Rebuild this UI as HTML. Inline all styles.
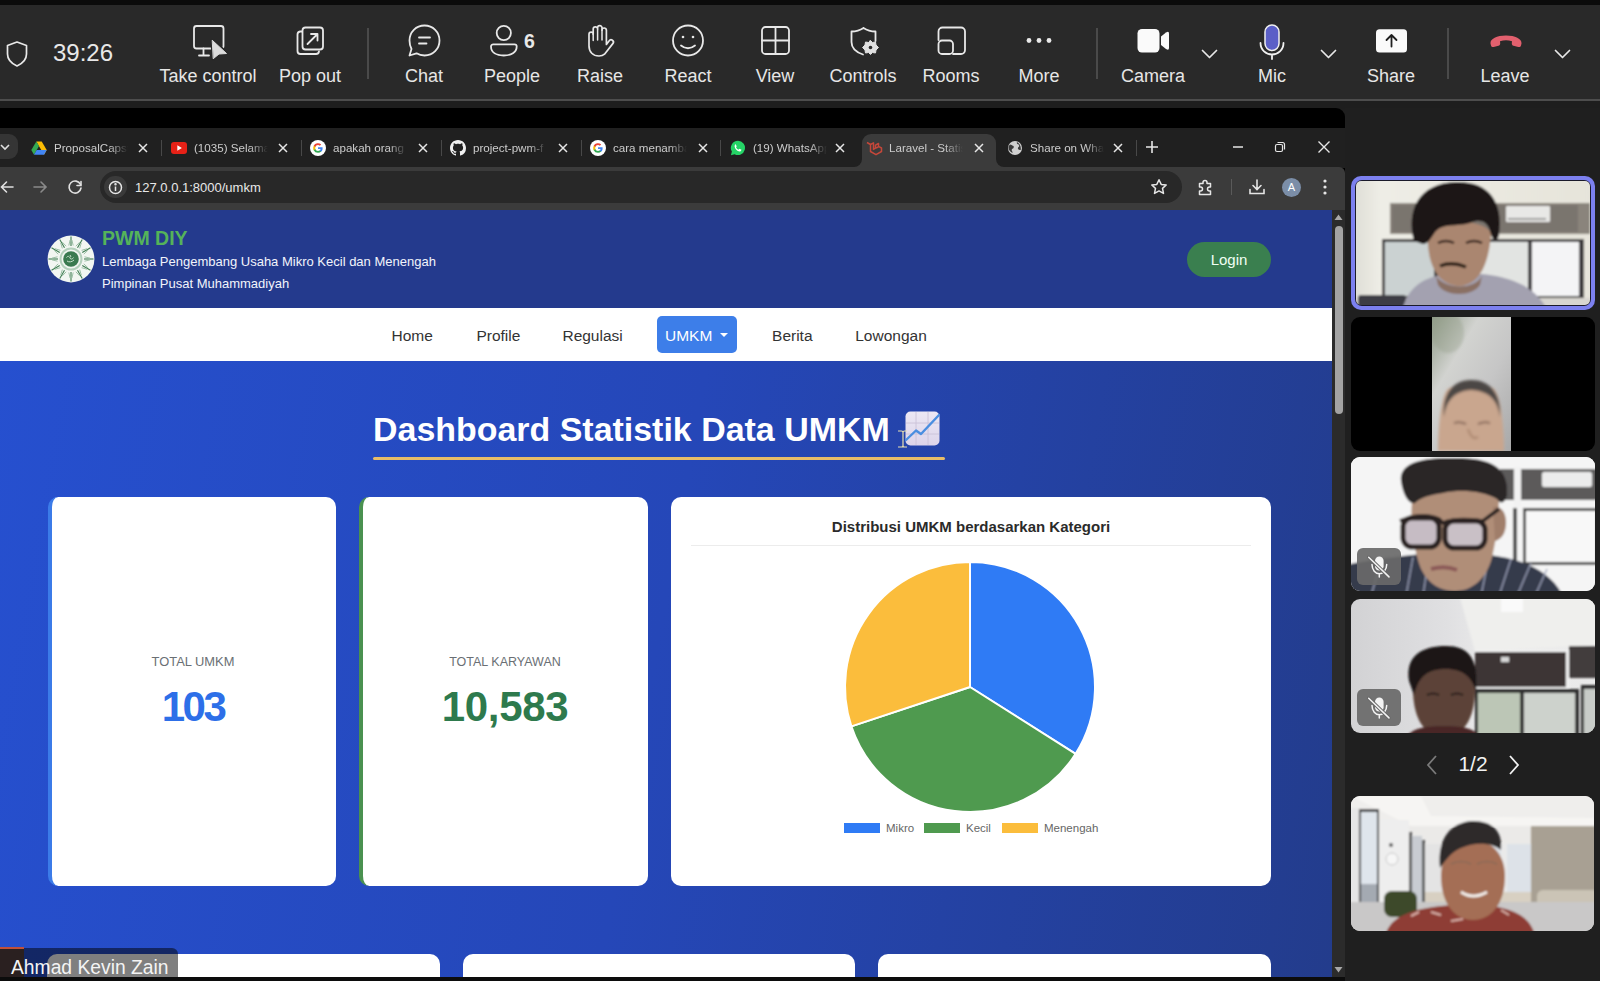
<!DOCTYPE html>
<html><head><meta charset="utf-8">
<style>
*{margin:0;padding:0;box-sizing:border-box}
html,body{width:1600px;height:981px;overflow:hidden;background:#1f1f1f;font-family:"Liberation Sans",sans-serif}
.abs{position:absolute}
#topstrip{position:absolute;left:0;top:0;width:1600px;height:5px;background:#0b0b0b}
#tbar{position:absolute;left:0;top:5px;width:1600px;height:94px;background:#292929}
#tline{position:absolute;left:0;top:99px;width:1600px;height:2px;background:#4d4d4d}
#tbelow{position:absolute;left:0;top:101px;width:1600px;height:8px;background:#1e1e1e}
.ti{position:absolute;top:0;height:94px;text-align:center;color:#e6e6e6;font-size:18px}
.ti .lb{position:absolute;left:-60px;right:-60px;top:58px;text-align:center;white-space:nowrap}
.ti svg{position:absolute;left:50%;top:18px;transform:translateX(-50%)}
.sep{position:absolute;top:23px;width:2px;height:52px;background:#4a4a4a}
#browser{position:absolute;left:0;top:108px;width:1345px;height:869px;background:#000;overflow:hidden;border-top-right-radius:9px}
#tabs{position:absolute;left:0;top:20px;width:1345px;height:40px;background:#202020}
#tooln{position:absolute;left:0;top:59px;width:1345px;height:43px;background:#3b3b3b;border-top-right-radius:6px}
.tab{position:absolute;top:0;height:37px;color:#d8d8d8;font-size:12px}
.tab .t{position:absolute;left:42px;top:12px;white-space:nowrap;overflow:hidden;width:72px}
.tab .x{position:absolute;left:130px;top:8px;font-size:16px;color:#e0e0e0}
#page{position:absolute;left:0;top:102px;width:1332px;height:767px;overflow:hidden;background:linear-gradient(100deg,#2650d0 0%,#2547b8 50%,#233c8c 100%)}
#hdr{position:absolute;left:0;top:0;width:1332px;height:98px;background:#243a8d}
#nav{position:absolute;left:0;top:98px;width:1332px;height:53px;background:#fff}
.nv{font-size:15.5px;line-height:18px;color:#333;white-space:nowrap}
.lg{font-size:11.5px;line-height:14px;color:#666}
.card{position:absolute;background:#fff;border-radius:10px}
#sb{position:absolute;left:1332px;top:102px;width:13px;height:767px;background:#2a2a2a}
#panel{position:absolute;left:1345px;top:108px;width:255px;height:873px;background:#1f1f1f}
.tile{position:absolute;left:1351px;width:244px;height:135px;border-radius:8px;overflow:hidden;background:#000}
</style></head><body>
<div id="topstrip"></div>
<div id="tbar"></div>
<div id="tline"></div>
<div id="tbelow"></div>

<svg class="abs" style="left:0;top:0" width="1600" height="100" viewBox="0 0 1600 100" fill="none" stroke="#e8e8e8" stroke-width="1.8" stroke-linecap="round" stroke-linejoin="round">
  <!-- shield -->
  <path d="M17 42 L26.5 45.5 V54 C26.5 59.5 22.5 63.5 17 66 C11.5 63.5 7.5 59.5 7.5 54 V45.5 Z" stroke-width="1.7"/>
  <!-- take control -->
  <rect x="194" y="26" width="29.5" height="22.5" rx="2.5"/>
  <path d="M203.5 48.5 V55.5 M199 55.5 H209"/>
  <path d="M212.5 40.5 L226.5 53.5 L219 54 L213.5 58.5 Z" fill="#292929" stroke="#292929" stroke-width="4"/><path d="M212.5 40.5 L226.5 53.5 L219 54 L213.5 58.5 Z" fill="#dcdcdc" stroke="#dcdcdc" stroke-width="1"/>
  <!-- pop out -->
  <path d="M302 31.5 H300 A3 3 0 0 0 297.5 34.5 V51 A3 3 0 0 0 300.5 54 H316 A3 3 0 0 0 319 51.5"/>
  <rect x="302.5" y="27.5" width="20.5" height="22" rx="3"/>
  <path d="M307.5 44 L317.5 34 M311 34 H317.5 V40.5"/>
  <!-- chat -->
  <path d="M424.5 25.5 C433 25.5 439.5 32 439.5 40.5 C439.5 49 433 55.5 424.5 55.5 C421.5 55.5 418.8 54.7 416.5 53.3 L409.5 55.5 L411.5 49 C410.2 46.5 409.5 43.5 409.5 40.5 C409.5 32 416 25.5 424.5 25.5 Z"/>
  <path d="M419 37.5 H430 M419 43.5 H426.5"/>
  <!-- people -->
  <circle cx="503.8" cy="33" r="7.1"/>
  <path d="M493.5 44.3 H514.5 A2.2 2.2 0 0 1 516.7 46.5 C516.7 52.5 511 55.5 503.8 55.5 C496.5 55.5 491 52.5 491 46.5 A2.2 2.2 0 0 1 493.5 44.3 Z"/>
  <!-- raise hand -->
  <path d="M589 46 V34.2 a2.1 2.1 0 0 1 4.2 0 V29 a2.2 2.2 0 0 1 4.4 0 V27.8 a2.2 2.2 0 0 1 4.4 0 V30.2 a2.2 2.2 0 0 1 4.4 0 V44.5 L609.2 40.8 a2.3 2.3 0 0 1 3.8 2.6 L604.5 54.2 C603 55.6 601.5 56 599 56 C593 56 589 52 589 46 Z" stroke-width="1.7"/>
  <path d="M593.2 34.5 V40.5 M597.6 29.5 V40 M602 30 V40" stroke-width="1.5"/>
  <!-- react -->
  <circle cx="688" cy="40.5" r="15"/>
  <circle cx="683" cy="37" r="1.3" fill="#e8e8e8" stroke="none"/>
  <circle cx="693" cy="37" r="1.3" fill="#e8e8e8" stroke="none"/>
  <path d="M681 45.5 Q688 51 695 45.5"/>
  <!-- view -->
  <rect x="762" y="27" width="27" height="27" rx="3.5"/>
  <path d="M775.5 27 V54 M762 40.5 H789"/>
  <!-- controls -->
  <path d="M863.5 28 C860.5 30 856 31.5 851.5 31.5 V42 C851.5 48 855.5 52 863 54.5 M863.5 28 C866.5 30 871 31.5 875.5 31.5 V41"/>
  <path d="M870.5 40.5 L872.5 42.5 L875.5 42 L876 45 L878.5 47.5 L876 50 L875.5 53 L872.5 52.5 L870.5 54.5 L868.5 52.5 L865.5 53 L865 50 L862.5 47.5 L865 45 L865.5 42 L868.5 42.5 Z" fill="#e0e0e0" stroke="#e0e0e0" stroke-width="1"/>
  <circle cx="870.5" cy="47.5" r="1.8" fill="#292929" stroke="none"/>
  <!-- rooms -->
  <path d="M938.5 40 V31.5 A4 4 0 0 1 942.5 27.5 H961 A4 4 0 0 1 965 31.5 V50 A4 4 0 0 1 961 54 H953"/>
  <rect x="938.5" y="40.5" width="14.5" height="13.5" rx="3.5"/>
  <!-- more -->
  <circle cx="1029" cy="40.5" r="2.4" fill="#e8e8e8" stroke="none"/>
  <circle cx="1039" cy="40.5" r="2.4" fill="#e8e8e8" stroke="none"/>
  <circle cx="1049" cy="40.5" r="2.4" fill="#e8e8e8" stroke="none"/>
  <!-- camera -->
  <rect x="1137.5" y="29" width="22" height="23.5" rx="4.5" fill="#fafafa" stroke="none"/>
  <path d="M1161 36.5 L1166 32.5 Q1169 30.5 1169 33.5 V48 Q1169 51 1166 49 L1161 45 Z" fill="#fafafa" stroke="none"/>
  <path d="M1202.5 50.5 L1209.5 57.5 L1216.5 50.5" stroke-width="1.7"/>
  <!-- mic -->
  <rect x="1265" y="25" width="14" height="25.5" rx="7" fill="#5b5fc7" stroke="#f0f0f0" stroke-width="1.5"/>
  <path d="M1260.5 43 C1260.5 50 1266 54.5 1272 54.5 C1278 54.5 1283.5 50 1283.5 43 M1272 54.5 V59" stroke="#f0f0f0"/>
  <path d="M1321.5 50.5 L1328.5 57.5 L1335.5 50.5" stroke-width="1.7"/>
  <!-- share -->
  <rect x="1376" y="29.3" width="31" height="23.3" rx="3.5" fill="#fafafa" stroke="none"/>
  <path d="M1391.5 46.5 V35 M1386.5 40 L1391.5 35 L1396.5 40" stroke="#202020" stroke-width="1.8"/>
  <!-- leave -->
  <path d="M1490.5 43.5 C1490 39 1497 35.5 1506 35.5 C1515 35.5 1522 39 1521.5 43.5 L1521 45.5 C1520.7 46.8 1519.5 47.3 1518.3 47 L1513.5 45.8 C1512.3 45.5 1511.7 44.5 1511.8 43.3 L1512 41.2 C1508 39.8 1504 39.8 1500 41.2 L1500.2 43.3 C1500.3 44.5 1499.7 45.5 1498.5 45.8 L1493.7 47 C1492.5 47.3 1491.3 46.8 1491 45.5 Z" fill="#e2606e" stroke="none"/>
  <path d="M1555.5 50.5 L1562.5 57.5 L1569.5 50.5" stroke-width="1.7"/>
</svg>
<div class="abs" style="left:53px;top:39px;font-size:24px;color:#e8e8e8;letter-spacing:0px;line-height:28px">39:26</div>
<div class="abs" style="left:524px;top:29px;font-size:19.5px;font-weight:bold;color:#e8e8e8;line-height:24px">6</div>
<div class="sep" style="left:367px;top:28px;height:51px"></div>
<div class="sep" style="left:1096px;top:28px;height:51px"></div>
<div class="sep" style="left:1447px;top:28px;height:51px"></div>
<div class="abs tl" style="left:128px;top:65px;width:160px;text-align:center;font-size:18px;line-height:22px;color:#e6e6e6">Take control</div>
<div class="abs tl" style="left:230px;top:65px;width:160px;text-align:center;font-size:18px;line-height:22px;color:#e6e6e6">Pop out</div>
<div class="abs tl" style="left:344px;top:65px;width:160px;text-align:center;font-size:18px;line-height:22px;color:#e6e6e6">Chat</div>
<div class="abs tl" style="left:432px;top:65px;width:160px;text-align:center;font-size:18px;line-height:22px;color:#e6e6e6">People</div>
<div class="abs tl" style="left:520px;top:65px;width:160px;text-align:center;font-size:18px;line-height:22px;color:#e6e6e6">Raise</div>
<div class="abs tl" style="left:608px;top:65px;width:160px;text-align:center;font-size:18px;line-height:22px;color:#e6e6e6">React</div>
<div class="abs tl" style="left:695px;top:65px;width:160px;text-align:center;font-size:18px;line-height:22px;color:#e6e6e6">View</div>
<div class="abs tl" style="left:783px;top:65px;width:160px;text-align:center;font-size:18px;line-height:22px;color:#e6e6e6">Controls</div>
<div class="abs tl" style="left:871px;top:65px;width:160px;text-align:center;font-size:18px;line-height:22px;color:#e6e6e6">Rooms</div>
<div class="abs tl" style="left:959px;top:65px;width:160px;text-align:center;font-size:18px;line-height:22px;color:#e6e6e6">More</div>
<div class="abs tl" style="left:1073px;top:65px;width:160px;text-align:center;font-size:18px;line-height:22px;color:#e6e6e6">Camera</div>
<div class="abs tl" style="left:1192px;top:65px;width:160px;text-align:center;font-size:18px;line-height:22px;color:#e6e6e6">Mic</div>
<div class="abs tl" style="left:1311px;top:65px;width:160px;text-align:center;font-size:18px;line-height:22px;color:#e6e6e6">Share</div>
<div class="abs tl" style="left:1425px;top:65px;width:160px;text-align:center;font-size:18px;line-height:22px;color:#e6e6e6">Leave</div>


<div id="browser">
  <div id="tabs"></div>
  <div id="tooln"></div>
<div class="abs" style="left:-12px;top:26px;width:30px;height:25px;border-radius:9px;background:#353535"></div><svg class="abs" style="left:0;top:34px" width="12" height="10" viewBox="0 0 12 10"><path d="M1 3l4 4 4-4" stroke="#e0e0e0" stroke-width="1.6" fill="none"/></svg><div class="abs" style="left:862px;top:26px;width:134px;height:40px;background:#3b3b3b;border-radius:9px 9px 0 0"></div><div class="abs" style="left:854px;top:51px;width:8px;height:8px;background:#3b3b3b"></div><div class="abs" style="left:846px;top:43px;width:16px;height:16px;background:#202020;border-radius:0 0 8px 0"></div><div class="abs" style="left:996px;top:51px;width:8px;height:8px;background:#3b3b3b"></div><div class="abs" style="left:996px;top:43px;width:16px;height:16px;background:#202020;border-radius:0 0 0 8px"></div><svg class="abs" style="left:31px;top:32px" width="16" height="16" viewBox="0 0 16 16"><path d="M5.3 1.5h5.4l5 8.6-2.7 4.6z" fill="#fbbc04"/><path d="M5.3 1.5L0.3 10.1l2.7 4.6 5-8.6z" fill="#34a853"/><path d="M3 14.7h10l2.7-4.6H5.7z" fill="#4285f4"/></svg><div class="abs" style="left:54px;top:32px;width:74px;height:16px;overflow:hidden;white-space:nowrap;font-size:11.6px;line-height:16px;color:#cdcdcd;-webkit-mask-image:linear-gradient(90deg,#000 75%,transparent 100%)">ProposalCapstone</div><svg class="abs" style="left:137px;top:34px" width="12" height="12" viewBox="0 0 12 12"><path d="M2 2l8 8M10 2l-8 8" stroke="#e6e6e6" stroke-width="1.5"/></svg><div class="abs" style="left:161px;top:32px;width:1px;height:16px;background:#484848"></div><svg class="abs" style="left:171px;top:34px" width="16" height="12" viewBox="0 0 16 12"><rect width="16" height="12" rx="3" fill="#e62117"/><path d="M6.3 3.3v5.4l4.6-2.7z" fill="#fff"/></svg><div class="abs" style="left:194px;top:32px;width:74px;height:16px;overflow:hidden;white-space:nowrap;font-size:11.6px;line-height:16px;color:#cdcdcd;-webkit-mask-image:linear-gradient(90deg,#000 75%,transparent 100%)">(1035) Selamat</div><svg class="abs" style="left:276.5px;top:34px" width="12" height="12" viewBox="0 0 12 12"><path d="M2 2l8 8M10 2l-8 8" stroke="#e6e6e6" stroke-width="1.5"/></svg><div class="abs" style="left:301px;top:32px;width:1px;height:16px;background:#484848"></div><svg class="abs" style="left:310px;top:32px" width="16" height="16" viewBox="0 0 16 16"><circle cx="8" cy="8" r="8" fill="#fff"/><path d="M12.6 8.2c0-.4 0-.7-.1-1H8v1.9h2.6a2.3 2.3 0 0 1-1 1.5v1.2h1.6c1-.9 1.400-2.100 1.400-3.600z" fill="#4285f4"/><path d="M8 12.8c1.3 0 2.4-.4 3.2-1.2l-1.6-1.2c-.4.3-1 .5-1.6.5-1.2 0-2.3-.8-2.6-2H3.7v1.3A4.8 4.8 0 0 0 8 12.8z" fill="#34a853"/><path d="M5.4 8.9a2.9 2.9 0 0 1 0-1.8V5.8H3.7a4.8 4.8 0 0 0 0 4.4z" fill="#fbbc04"/><path d="M8 5.1c.7 0 1.3.2 1.8.7l1.4-1.4A4.8 4.8 0 0 0 3.7 5.8l1.7 1.3c.3-1.2 1.4-2 2.6-2z" fill="#ea4335"/></svg><div class="abs" style="left:333px;top:32px;width:74px;height:16px;overflow:hidden;white-space:nowrap;font-size:11.6px;line-height:16px;color:#cdcdcd;-webkit-mask-image:linear-gradient(90deg,#000 75%,transparent 100%)">apakah orang</div><svg class="abs" style="left:416.5px;top:34px" width="12" height="12" viewBox="0 0 12 12"><path d="M2 2l8 8M10 2l-8 8" stroke="#e6e6e6" stroke-width="1.5"/></svg><div class="abs" style="left:440.5px;top:32px;width:1px;height:16px;background:#484848"></div><svg class="abs" style="left:450px;top:32px" width="16" height="16" viewBox="0 0 16 16"><path fill="#f0f0f0" d="M8 0C3.58 0 0 3.58 0 8c0 3.54 2.29 6.53 5.47 7.590.4.07.55-.17.55-.38 0-.19-.01-.82-.01-1.49-2.01.37-2.53-.49-2.69-.94-.09-.23-.48-.94-.82-1.13-.28-.15-.68-.52-.01-.53.63-.01 1.08.58 1.23.82.72 1.21 1.87.87 2.33.66.07-.52.28-.87.51-1.07-1.78-.2-3.64-.89-3.64-3.95 0-.87.31-1.59.82-2.15-.08-.2-.36-1.02.08-2.12 0 0 .67-.21 2.2.82.64-.18 1.32-.27 2-.27.68 0 1.36.09 2 .27 1.53-1.04 2.2-.82 2.2-.82.44 1.1.16 1.92.08 2.12.51.56.82 1.27.82 2.15 0 3.07-1.87 3.75-3.65 3.95.29.25.54.73.54 1.48 0 1.07-.01 1.93-.01 2.2 0 .21.15.46.55.38A8.01 8.01 0 0 0 16 8c0-4.42-3.58-8-8-8z"/></svg><div class="abs" style="left:473px;top:32px;width:74px;height:16px;overflow:hidden;white-space:nowrap;font-size:11.6px;line-height:16px;color:#cdcdcd;-webkit-mask-image:linear-gradient(90deg,#000 75%,transparent 100%)">project-pwm-f</div><svg class="abs" style="left:556.5px;top:34px" width="12" height="12" viewBox="0 0 12 12"><path d="M2 2l8 8M10 2l-8 8" stroke="#e6e6e6" stroke-width="1.5"/></svg><div class="abs" style="left:580.5px;top:32px;width:1px;height:16px;background:#484848"></div><svg class="abs" style="left:590px;top:32px" width="16" height="16" viewBox="0 0 16 16"><circle cx="8" cy="8" r="8" fill="#fff"/><path d="M12.6 8.2c0-.4 0-.7-.1-1H8v1.9h2.6a2.3 2.3 0 0 1-1 1.5v1.2h1.6c1-.9 1.400-2.100 1.400-3.600z" fill="#4285f4"/><path d="M8 12.8c1.3 0 2.4-.4 3.2-1.2l-1.6-1.2c-.4.3-1 .5-1.6.5-1.2 0-2.3-.8-2.6-2H3.7v1.3A4.8 4.8 0 0 0 8 12.8z" fill="#34a853"/><path d="M5.4 8.9a2.9 2.9 0 0 1 0-1.8V5.8H3.7a4.8 4.8 0 0 0 0 4.4z" fill="#fbbc04"/><path d="M8 5.1c.7 0 1.3.2 1.8.7l1.4-1.4A4.8 4.8 0 0 0 3.7 5.8l1.7 1.3c.3-1.2 1.4-2 2.6-2z" fill="#ea4335"/></svg><div class="abs" style="left:613px;top:32px;width:74px;height:16px;overflow:hidden;white-space:nowrap;font-size:11.6px;line-height:16px;color:#cdcdcd;-webkit-mask-image:linear-gradient(90deg,#000 75%,transparent 100%)">cara menambah</div><svg class="abs" style="left:696.5px;top:34px" width="12" height="12" viewBox="0 0 12 12"><path d="M2 2l8 8M10 2l-8 8" stroke="#e6e6e6" stroke-width="1.5"/></svg><div class="abs" style="left:720px;top:32px;width:1px;height:16px;background:#484848"></div><svg class="abs" style="left:730px;top:32px" width="16" height="16" viewBox="0 0 16 16"><path d="M8 .8a7.1 7.1 0 0 0-6.1 10.8L.9 15.2l3.7-1A7.1 7.1 0 1 0 8 .8z" fill="#25d366"/><path d="M5.4 4.3c.2 0 .4 0 .5.3l.7 1.6c.1.2 0 .4-.1.5l-.5.6c.5 1 1.4 1.9 2.5 2.4l.6-.7c.1-.2.3-.2.5-.1l1.6.7c.2.1.3.3.2.5-.2.9-.9 1.5-1.8 1.5-2.5-.3-4.7-2.4-5-5 0-.9.4-1.9.8-2.3z" fill="#fff"/></svg><div class="abs" style="left:753px;top:32px;width:74px;height:16px;overflow:hidden;white-space:nowrap;font-size:11.6px;line-height:16px;color:#cdcdcd;-webkit-mask-image:linear-gradient(90deg,#000 75%,transparent 100%)">(19) WhatsApp</div><svg class="abs" style="left:834px;top:34px" width="12" height="12" viewBox="0 0 12 12"><path d="M2 2l8 8M10 2l-8 8" stroke="#e6e6e6" stroke-width="1.5"/></svg><svg class="abs" style="left:865px;top:31px" width="18" height="18" viewBox="0 0 18 18" fill="none" stroke="#c4473a" stroke-width="1.5" stroke-linejoin="round"><path d="M2 3.5l3.5 2v7l5.5 3.2 5.5-3.2V9l-3-1.7V4.5l-3 1.7v3l-2.5 1.5M5.5 5.5l3-1.7v7M11 9.2l3-1.7"/></svg><div class="abs" style="left:889px;top:32px;width:74px;height:16px;overflow:hidden;white-space:nowrap;font-size:11.6px;line-height:16px;color:#cdcdcd;-webkit-mask-image:linear-gradient(90deg,#000 75%,transparent 100%)">Laravel - Statistik</div><svg class="abs" style="left:973px;top:34px" width="12" height="12" viewBox="0 0 12 12"><path d="M2 2l8 8M10 2l-8 8" stroke="#e6e6e6" stroke-width="1.5"/></svg><svg class="abs" style="left:1007px;top:32px" width="16" height="16" viewBox="0 0 16 16"><circle cx="8" cy="8" r="7" fill="#d0d0d0"/><path d="M3 4.5c1.5 0 2 1 3 1.2s1 1.5.5 2.3-1.8.8-1.8 2 1 1.5.8 3C3.3 12 1.5 9.8 1.5 8 1.5 6.6 2 5.5 3 4.5zM10 2c-.5 1 0 2 1 2.3s1.5 1.2 1 2.2-1.5 1-1 2.3 1.5 1.2 2.7 1.3C14.3 7 13 3.5 10 2z" fill="#3a3a3a"/></svg><div class="abs" style="left:1030px;top:32px;width:74px;height:16px;overflow:hidden;white-space:nowrap;font-size:11.6px;line-height:16px;color:#cdcdcd;-webkit-mask-image:linear-gradient(90deg,#000 75%,transparent 100%)">Share on WhatsApp</div><svg class="abs" style="left:1112px;top:34px" width="12" height="12" viewBox="0 0 12 12"><path d="M2 2l8 8M10 2l-8 8" stroke="#e6e6e6" stroke-width="1.5"/></svg><div class="abs" style="left:1136px;top:32px;width:1px;height:16px;background:#484848"></div><svg class="abs" style="left:1145px;top:32px" width="14" height="14" viewBox="0 0 14 14"><path d="M7 1v12M1 7h12" stroke="#e6e6e6" stroke-width="1.6"/></svg><svg class="abs" style="left:1232px;top:32px" width="12" height="14" viewBox="0 0 12 14"><path d="M1 7h10" stroke="#e6e6e6" stroke-width="1.3"/></svg><svg class="abs" style="left:1274px;top:33px" width="12" height="12" viewBox="0 0 12 12" fill="none" stroke="#e6e6e6" stroke-width="1.2"><rect x="1.5" y="3.5" width="7" height="7" rx="1.5"/><path d="M3.5 1.5h5a2 2 0 0 1 2 2v5"/></svg><svg class="abs" style="left:1317px;top:32px" width="14" height="14" viewBox="0 0 14 14"><path d="M1.5 1.5l11 11M12.5 1.5l-11 11" stroke="#e6e6e6" stroke-width="1.4"/></svg><svg class="abs" style="left:0;top:71px" width="90" height="16" viewBox="0 0 90 16" fill="none" stroke-width="1.6" stroke-linecap="round"><path d="M13 8H1.5M6.5 3L1.5 8l5 5" stroke="#e0e0e0"/><path d="M34 8h12M41 3l5 5-5 5" stroke="#8a8a8a"/><path d="M80.5 5.5A6 6 0 1 0 81 9" stroke="#e0e0e0"/><path d="M81 2.5v4h-4" stroke="#e0e0e0"/></svg><div class="abs" style="left:100px;top:63px;width:1082px;height:32px;border-radius:16px;background:#282828"></div><div class="abs" style="left:104px;top:68px;width:23px;height:22px;border-radius:11px;background:#3a3a3a"></div><svg class="abs" style="left:108px;top:72px" width="15" height="15" viewBox="0 0 15 15" fill="none" stroke="#e6e6e6" stroke-width="1.5"><circle cx="7.5" cy="7.5" r="6"/><path d="M7.5 6.5v4.5"/><circle cx="7.5" cy="4.3" r=".5" fill="#e6e6e6"/></svg><div class="abs" style="left:135px;top:72px;font-size:13px;line-height:16px;color:#e8e8e8">127.0.0.1:8000/umkm</div><svg class="abs" style="left:1150px;top:70px" width="18" height="18" viewBox="0 0 18 18"><path d="M9 1.8l2.2 4.6 5 .6-3.7 3.4 1 5-4.5-2.5-4.5 2.5 1-5L1.8 7l5-.6z" fill="none" stroke="#e6e6e6" stroke-width="1.5" stroke-linejoin="round"/></svg><svg class="abs" style="left:1197px;top:70px" width="18" height="18" viewBox="0 0 18 18"><path d="M2.5 5.5h3.5v-1a2 2 0 0 1 4 0v1h3.5v3.5h-1a2 2 0 0 0 0 4h1v3.5h-11v-3.5h1a2 2 0 0 0 0-4h-1z" fill="none" stroke="#e6e6e6" stroke-width="1.5" stroke-linejoin="round"/></svg><div class="abs" style="left:1231px;top:71px;width:1px;height:16px;background:#5a5a5a"></div><svg class="abs" style="left:1248px;top:70px" width="18" height="18" viewBox="0 0 18 18" fill="none" stroke="#e6e6e6" stroke-width="1.6" stroke-linecap="round"><path d="M9 2v9M5 7.5l4 4 4-4M2 11.5v4h14v-4"/></svg><div class="abs" style="left:1282px;top:70px;width:19px;height:19px;border-radius:50%;background:#7b8ea8;color:#fff;font-size:11px;line-height:19px;text-align:center">A</div><svg class="abs" style="left:1320px;top:70px" width="10" height="18" viewBox="0 0 10 18" fill="#e6e6e6"><circle cx="5" cy="3" r="1.6"/><circle cx="5" cy="9" r="1.6"/><circle cx="5" cy="15" r="1.6"/></svg>
  <div id="page">

    <div id="hdr">
      <svg class="abs" style="left:46.5px;top:25px" width="48" height="48" viewBox="0 0 48 48"><circle cx="24" cy="24" r="23.4" fill="#f2f6f2"/><circle cx="24" cy="24" r="10.5" fill="none" stroke="#b4d0bc" stroke-width="2"/><path d="M24.00 11.00L24.00 1.50" stroke="#3f7c52" stroke-width="1.1"/><path d="M26.20 10.50L24.88 5.00" stroke="#9cc0a6" stroke-width="1"/><path d="M21.80 10.50L23.12 5.00" stroke="#9cc0a6" stroke-width="1"/><path d="M30.50 12.74L35.25 4.51" stroke="#3f7c52" stroke-width="1.1"/><path d="M32.66 13.41L34.26 7.99" stroke="#9cc0a6" stroke-width="1"/><path d="M28.84 11.21L32.74 7.11" stroke="#9cc0a6" stroke-width="1"/><path d="M35.26 17.50L43.49 12.75" stroke="#3f7c52" stroke-width="1.1"/><path d="M36.79 19.16L40.89 15.26" stroke="#9cc0a6" stroke-width="1"/><path d="M34.59 15.34L40.01 13.74" stroke="#9cc0a6" stroke-width="1"/><path d="M37.00 24.00L46.50 24.00" stroke="#3f7c52" stroke-width="1.1"/><path d="M37.50 26.20L43.00 24.88" stroke="#9cc0a6" stroke-width="1"/><path d="M37.50 21.80L43.00 23.12" stroke="#9cc0a6" stroke-width="1"/><path d="M35.26 30.50L43.49 35.25" stroke="#3f7c52" stroke-width="1.1"/><path d="M34.59 32.66L40.01 34.26" stroke="#9cc0a6" stroke-width="1"/><path d="M36.79 28.84L40.89 32.74" stroke="#9cc0a6" stroke-width="1"/><path d="M30.50 35.26L35.25 43.49" stroke="#3f7c52" stroke-width="1.1"/><path d="M28.84 36.79L32.74 40.89" stroke="#9cc0a6" stroke-width="1"/><path d="M32.66 34.59L34.26 40.01" stroke="#9cc0a6" stroke-width="1"/><path d="M24.00 37.00L24.00 46.50" stroke="#3f7c52" stroke-width="1.1"/><path d="M21.80 37.50L23.12 43.00" stroke="#9cc0a6" stroke-width="1"/><path d="M26.20 37.50L24.88 43.00" stroke="#9cc0a6" stroke-width="1"/><path d="M17.50 35.26L12.75 43.49" stroke="#3f7c52" stroke-width="1.1"/><path d="M15.34 34.59L13.74 40.01" stroke="#9cc0a6" stroke-width="1"/><path d="M19.16 36.79L15.26 40.89" stroke="#9cc0a6" stroke-width="1"/><path d="M12.74 30.50L4.51 35.25" stroke="#3f7c52" stroke-width="1.1"/><path d="M11.21 28.84L7.11 32.74" stroke="#9cc0a6" stroke-width="1"/><path d="M13.41 32.66L7.99 34.26" stroke="#9cc0a6" stroke-width="1"/><path d="M11.00 24.00L1.50 24.00" stroke="#3f7c52" stroke-width="1.1"/><path d="M10.50 21.80L5.00 23.12" stroke="#9cc0a6" stroke-width="1"/><path d="M10.50 26.20L5.00 24.88" stroke="#9cc0a6" stroke-width="1"/><path d="M12.74 17.50L4.51 12.75" stroke="#3f7c52" stroke-width="1.1"/><path d="M13.41 15.34L7.99 13.74" stroke="#9cc0a6" stroke-width="1"/><path d="M11.21 19.16L7.11 15.26" stroke="#9cc0a6" stroke-width="1"/><path d="M17.50 12.74L12.75 4.51" stroke="#3f7c52" stroke-width="1.1"/><path d="M19.16 11.21L15.26 7.11" stroke="#9cc0a6" stroke-width="1"/><path d="M15.34 13.41L13.74 7.99" stroke="#9cc0a6" stroke-width="1"/><circle cx="24" cy="24" r="7.8" fill="#3a7a50"/><path d="M19.5 22.5c1.5-2 3-1 3.5.5s2.5 1.5 3.5-.5M20 26c2 1.5 5 1 7-1M23 20l1 2" stroke="#c8e0cc" stroke-width="1" fill="none"/></svg>
      <div class="abs" style="left:102px;top:16px;font-size:19.5px;line-height:24px;font-weight:bold;color:#55b35a">PWM DIY</div>
      <div class="abs" style="left:102px;top:42.5px;font-size:13px;line-height:18px;color:#f2f4fb">Lembaga Pengembang Usaha Mikro Kecil dan Menengah</div>
      <div class="abs" style="left:102px;top:64.5px;font-size:13px;line-height:18px;color:#f2f4fb">Pimpinan Pusat Muhammadiyah</div>
      <div class="abs" style="left:1187px;top:32px;width:84px;height:35px;border-radius:18px;background:#3a7f4f;color:#f0fff4;font-size:15px;line-height:35px;text-align:center">Login</div>
    </div>
    <div id="nav">
      <div class="abs nv" style="left:352.2px;top:19px;width:120px;text-align:center">Home</div>
      <div class="abs nv" style="left:438.4px;top:19px;width:120px;text-align:center">Profile</div>
      <div class="abs nv" style="left:532.6px;top:19px;width:120px;text-align:center">Regulasi</div>
      <div class="abs" style="left:657px;top:8px;width:80px;height:37px;border-radius:5px;background:#3d7ee9"></div>
      <div class="abs nv" style="left:628.7px;top:19px;width:120px;text-align:center;color:#fff">UMKM</div>
      <svg class="abs" style="left:719px;top:24px" width="10" height="6" viewBox="0 0 10 6"><path d="M1 1h8L5 5z" fill="#fff"/></svg>
      <div class="abs nv" style="left:732.3px;top:19px;width:120px;text-align:center">Berita</div>
      <div class="abs nv" style="left:831.0px;top:19px;width:120px;text-align:center">Lowongan</div>
    </div>
    <div class="abs" style="left:373px;top:198px;font-size:33.95px;line-height:42px;font-weight:bold;color:#fff;white-space:nowrap">Dashboard Statistik Data UMKM</div>
    <svg class="abs" style="left:905px;top:201px" width="35" height="36" viewBox="0 0 35 36">
      <defs><linearGradient id="eg" x1="0" y1="0" x2="0" y2="1"><stop offset="0" stop-color="#ece8f4"/><stop offset="1" stop-color="#dcd4ea"/></linearGradient></defs>
      <rect x="0.5" y="0.5" width="34" height="34" rx="5" fill="url(#eg)"/>
      <path d="M11 1v33M23 1v33M1 12h33M1 23h33" stroke="#cbc2d8" stroke-width=".9"/>
      <path d="M1 29 L11 19.5 L16 23 L34 4" stroke="#4a8ee0" stroke-width="2.4" fill="none" stroke-linecap="round" stroke-linejoin="round"/>
    </svg>
    <svg class="abs" style="left:897px;top:220px" width="11" height="18" viewBox="0 0 11 18" fill="none" stroke-width="1.2"><path d="M1 1h3.5a1.5 1.5 0 0 1 1.5 1.5V15.5A1.5 1.5 0 0 1 4.5 17H1M10 1H7.5A1.5 1.5 0 0 0 6 2.5M6 15.5A1.5 1.5 0 0 0 7.5 17H10" stroke="#e8e0b0"/></svg>
    <div class="abs" style="left:373px;top:247px;width:572px;height:3px;background:#e8bd68;border-radius:2px"></div>

    <div class="card" style="left:48px;top:287px;width:288px;height:389px;border-left:4px solid #3b7be8"></div>
    <div class="abs" style="left:48px;top:444px;width:290px;text-align:center;font-size:12.9px;line-height:16px;color:#6a6f74">TOTAL UMKM</div>
    <div class="abs" style="left:48px;top:474px;width:290px;text-align:center;font-size:42px;line-height:46px;font-weight:bold;color:#2d6fe8;letter-spacing:-2.5px">103</div>

    <div class="card" style="left:359px;top:287px;width:289px;height:389px;border-left:4px solid #4a9150"></div>
    <div class="abs" style="left:359px;top:444px;width:292px;text-align:center;font-size:12.5px;line-height:16px;color:#6a6f74">TOTAL KARYAWAN</div>
    <div class="abs" style="left:359px;top:474px;width:292px;text-align:center;font-size:42px;line-height:46px;font-weight:bold;color:#2e7a4d;letter-spacing:-0.3px">10,583</div>

    <div class="card" style="left:671px;top:287px;width:600px;height:389px"></div>
    <div class="abs" style="left:671px;top:307px;width:600px;text-align:center;font-size:15px;line-height:20px;font-weight:bold;color:#2b2b2b">Distribusi UMKM berdasarkan Kategori</div>
    <div class="abs" style="left:691px;top:335px;width:560px;height:1px;background:#ececec"></div>
    <svg class="abs" style="left:830px;top:337px" width="280" height="280" viewBox="0 0 280 280" id="pie"><path d="M140 140L140.00 15.00A125 125 0 0 1 245.62 206.85Z" fill="#2f7bf5" stroke="#fff" stroke-width="2" stroke-linejoin="round"/><path d="M140 140L245.62 206.85A125 125 0 0 1 21.36 179.35Z" fill="#4f9a4f" stroke="#fff" stroke-width="2" stroke-linejoin="round"/><path d="M140 140L21.36 179.35A125 125 0 0 1 140.00 15.00Z" fill="#fbbd3c" stroke="#fff" stroke-width="2" stroke-linejoin="round"/></svg>
    <div class="abs" style="left:844px;top:613px;width:36px;height:10px;background:#2f7bf5"></div>
    <div class="abs lg" style="left:886px;top:611px">Mikro</div>
    <div class="abs" style="left:924px;top:613px;width:36px;height:10px;background:#4f9a4f"></div>
    <div class="abs lg" style="left:966px;top:611px">Kecil</div>
    <div class="abs" style="left:1002px;top:613px;width:36px;height:10px;background:#fbbd3c"></div>
    <div class="abs lg" style="left:1044px;top:611px">Menengah</div>

    <div class="card" style="left:47px;top:744px;width:393px;height:60px"></div>
    <div class="card" style="left:463px;top:744px;width:392px;height:60px"></div>
    <div class="card" style="left:878px;top:744px;width:393px;height:60px"></div>

  </div>
  <div id="sb"></div>
</div>
<div id="panel"></div>

<!-- scrollbar -->
<div class="abs" style="left:1332px;top:210px;width:13px;height:767px;background:#2b2b2b"></div>
<svg class="abs" style="left:1333px;top:212px" width="11" height="10" viewBox="0 0 11 10"><path d="M1.5 8L5.5 2.5 9.5 8z" fill="#a8a8a8"/></svg>
<div class="abs" style="left:1335px;top:226px;width:8px;height:188px;border-radius:4px;background:#a3a3a3"></div>
<svg class="abs" style="left:1333px;top:965px" width="11" height="10" viewBox="0 0 11 10"><path d="M1.5 2L5.5 7.5 9.5 2z" fill="#a8a8a8"/></svg>
<div class="abs" style="left:1345px;top:108px;width:6px;height:873px;background:#1f1f1f"></div>
<div class="abs" style="left:0;top:977px;width:1345px;height:4px;background:#0c0c0c"></div>
<!-- name label -->
<div class="abs" style="left:0;top:948px;width:178px;height:29px;border-radius:0 6px 0 0;background:rgba(0,0,0,0.5)"></div>
<div class="abs" style="left:0;top:947px;width:24px;height:30px;background:#2a2020"></div>
<div class="abs" style="left:0;top:947px;width:24px;height:2px;background:#c0503a"></div>
<div class="abs" style="left:11px;top:957px;font-size:19.3px;line-height:22px;color:#f4f4f4;white-space:nowrap">Ahmad Kevin Zain</div>

<!-- tile 1 -->
<div class="abs" style="left:1351px;top:176px;width:244px;height:134px;border-radius:10px;background:#7c80ef"></div>
<div class="abs" style="left:1355px;top:180px;width:236px;height:126px;border-radius:7px;background:#1a1a2a"></div>
<svg class="abs" style="left:1356px;top:181px" width="234" height="124" viewBox="0 0 234 124">
  <defs><clipPath id="c1"><rect width="234" height="124" rx="5"/></clipPath>
  <filter id="bl1" x="-5%" y="-5%" width="110%" height="110%"><feGaussianBlur stdDeviation="0.9"/></filter>
  <linearGradient id="w1" x1="0" y1="0" x2="1" y2="0"><stop offset="0" stop-color="#dcdcd4"/><stop offset=".12" stop-color="#eeede6"/><stop offset="1" stop-color="#e6e4da"/></linearGradient></defs>
  <g clip-path="url(#c1)"><g filter="url(#bl1)">
  <rect x="-5" y="-5" width="244" height="134" fill="url(#w1)"/>
  <rect x="34" y="22" width="190" height="31" fill="#8a847c"/>
  <rect x="36" y="24" width="186" height="27" fill="#7a746e"/>
  <rect x="150" y="25" width="44" height="16" rx="1" fill="#e8e8e6"/>
  <rect x="152" y="37" width="38" height="2" fill="#9a9a9a"/>
  <rect x="222" y="22" width="12" height="31" fill="#8a847c"/>
  <rect x="26" y="58" width="202" height="59" fill="#3c3a3c"/>
  <rect x="29" y="61" width="49" height="54" fill="#cbd2d2"/>
  <rect x="82" y="61" width="90" height="54" fill="#e2e4e2"/>
  <rect x="176" y="61" width="47" height="54" fill="#f4f4f6"/>
  <rect x="-5" y="117" width="244" height="12" fill="#d8d6d0"/>
  <rect x="2" y="114" width="48" height="12" rx="3" fill="#3c3c44"/>
  <path d="M46 130 C52 104 70 94 100 92 C140 92 176 98 192 130 Z" fill="#a3a1b0"/>
  <path d="M80 95 C88 108 118 110 126 95 L124 104 C116 116 90 116 82 104 Z" fill="#8a7064"/>
  <path d="M72 50 C70 80 80 104 103 105 C123 104 133 84 135 52 C128 38 82 36 72 50 Z" fill="#aa8670"/>
  <path d="M58 60 C50 30 62 2 100 1 C132 0 148 20 143 54 C141 62 136 60 134 50 C131 40 124 38 114 42 C100 46 88 42 80 50 C75 56 72 66 64 62 Z" fill="#1c1616"/>
  <path d="M84 85 Q96 80 110 86" stroke="#2e2018" stroke-width="3.5" fill="none"/>
  <path d="M82 62 Q90 58 98 62 M110 62 Q118 58 126 62" stroke="#3a2820" stroke-width="2.5" fill="none"/>
  </g></g>
</svg>
<!-- tile 2 -->
<div class="abs" style="left:1351px;top:317px;width:244px;height:134px;border-radius:9px;background:#000;overflow:hidden">
<svg class="abs" style="left:81px;top:0" width="79" height="134" viewBox="0 0 79 134">
  <defs><linearGradient id="s2" x1="0" y1="0" x2="1" y2="1"><stop offset="0" stop-color="#8e9a86"/><stop offset=".3" stop-color="#d2d3d0"/><stop offset=".6" stop-color="#c6c6c6"/><stop offset="1" stop-color="#a8a8a8"/></linearGradient>
  <filter id="bl2"><feGaussianBlur stdDeviation="1.5"/></filter></defs>
  <rect width="79" height="134" fill="url(#s2)"/>
  <g filter="url(#bl2)">
  <ellipse cx="16" cy="16" rx="16" ry="20" fill="#8e9a88" opacity=".35"/>
  <path d="M6 134 C6 118 8 80 16 72 C24 66 52 64 62 72 C70 80 72 118 72 134 Z" fill="#c9a68e"/>
  <path d="M12 100 C10 78 20 63 39 63 C58 63 69 76 68 100 C66 84 58 74 39 73 C22 74 14 84 12 100 Z" fill="#4c4644"/>
  <path d="M22 106 Q28 104 34 107 M46 107 Q52 104 58 106" stroke="#6a4c40" stroke-width="1.5" fill="none"/>
  <path d="M36 112 Q40 124 46 120" stroke="#a8846c" stroke-width="2" fill="none"/>
  </g>
</svg>
</div>
<!-- tile 3 -->
<div class="abs" style="left:1351px;top:457px;width:244px;height:134px;border-radius:9px;overflow:hidden;background:#f5f5f5">
<svg class="abs" style="left:0;top:0" width="244" height="134" viewBox="0 0 244 134">
  <defs><filter id="bl3" x="-5%" y="-5%" width="110%" height="110%"><feGaussianBlur stdDeviation="1"/></filter></defs>
  <g filter="url(#bl3)">
  <rect x="-5" y="-5" width="254" height="144" fill="#f5f5f5"/>
  <rect x="149" y="12" width="100" height="31" fill="#5c5a5a"/>
  <rect x="163" y="10" width="7" height="40" fill="#f2f2f2"/>
  <rect x="191" y="15" width="50" height="15" rx="2" fill="#ececec"/>
  <rect x="162" y="51" width="4" height="60" fill="#4a4a4a"/>
  <rect x="172" y="51" width="75" height="57" fill="#444"/>
  <rect x="175" y="54" width="70" height="51" fill="#f8f8f8"/>
  <path d="M-5 139 V108 C30 100 70 96 110 96 C150 97 195 104 212 139 Z" fill="#363a4c"/>
  <path d="M55 139 L62 100 M72 139 L78 98 M130 139 L138 99 M148 139 L160 102 M166 139 L180 106 M184 139 L196 112 M20 139 L30 104" stroke="#9aa0b8" stroke-width="1.3"/>
  <path d="M62 36 C58 62 62 90 70 112 C78 128 90 134 104 134 C124 134 138 118 142 96 C146 78 148 60 148 34 C120 26 90 26 62 36 Z" fill="#b08e78"/>
  <path d="M142 50 C150 48 156 56 155 68 C154 78 150 82 144 84 Z" fill="#a07e6a"/>
  <path d="M50 24 C48 6 70 0 104 1 C140 1 158 10 156 38 C154 46 150 48 146 42 C132 34 110 32 92 36 C80 38 70 40 64 46 C58 48 52 38 50 24 Z" fill="#2a2628"/>
  <path d="M49 64 L60 60 C70 58 80 58 88 62 L92 66 C100 62 116 62 132 64 L148 52" stroke="#2a2220" stroke-width="3.5" fill="none"/>
  <rect x="52" y="61" width="36" height="29" rx="9" fill="#c6bcc4" stroke="#2a2220" stroke-width="5"/>
  <rect x="94" y="64" width="40" height="27" rx="9" fill="#c9c0c6" stroke="#2a2220" stroke-width="5"/>
  <path d="M80 112 Q94 108 106 113" stroke="#8c5a58" stroke-width="4" fill="none"/>
  </g>
</svg>
</div>
<div class="abs" style="left:1357px;top:548px;width:44px;height:37px;border-radius:6px;background:rgba(105,105,105,0.92)"></div>
<svg class="abs" style="left:1357px;top:548px" width="44" height="37" viewBox="0 0 44 37" fill="none" stroke-linecap="round">
<rect x="18" y="8.5" width="8.6" height="14" rx="4.3" fill="#f4f4f4"/>
<path d="M15 16.5 C15 22 18.5 25.7 22.3 25.7 C26 25.7 29.7 22 29.7 16.5 M22.3 25.7 V29" stroke="#f4f4f4" stroke-width="1.5"/>
<path d="M11.7 9.3 L32 28.9" stroke="#696969" stroke-width="3.5"/>
<path d="M11.7 9.3 L32 28.9" stroke="#f4f4f4" stroke-width="1.5"/>
</svg>
<!-- tile 4 -->
<div class="abs" style="left:1351px;top:599px;width:244px;height:134px;border-radius:9px;overflow:hidden;background:linear-gradient(90deg,#d2d2d4 0%,#e0e0e2 40%,#ececec 60%,#eaeaea 100%)">
<svg class="abs" style="left:0;top:0" width="244" height="134" viewBox="0 0 244 134">
  <defs><filter id="bl4" x="-5%" y="-5%" width="110%" height="110%"><feGaussianBlur stdDeviation="0.9"/></filter></defs>
  <g filter="url(#bl4)">
  <path d="M108 -5 L249 -5 L249 46 L124 52 Z" fill="#efefed"/>
  <path d="M150 -5 h22 v18 h-22z" fill="#fafafa"/>
  <rect x="124" y="51" width="94" height="38" fill="#f2f2f2"/>
  <rect x="124" y="53" width="91" height="35" fill="#3e3636"/>
  <rect x="150" y="58" width="8" height="5" fill="#d8d8d8"/>
  <rect x="218" y="47" width="31" height="32" fill="#433c3c"/>
  <rect x="124" y="90" width="104" height="49" fill="#2e2e2e"/>
  <rect x="127" y="94" width="42" height="45" fill="#bcc6b6"/>
  <rect x="173" y="94" width="51" height="45" fill="#cdd2cc"/>
  <rect x="230" y="86" width="19" height="53" fill="#2e2e2e"/>
  <rect x="233" y="90" width="16" height="49" fill="#c8ccc8"/>
  <path d="M62 90 C62 120 74 138 93 138 C112 138 124 120 124 90 C124 70 112 64 93 64 C74 64 62 70 62 90 Z" fill="#5c4238"/>
  <path d="M58 82 C54 56 72 47 95 47 C118 47 128 60 125 92 C120 76 110 70 95 70 C78 70 68 76 63 96 Z" fill="#1a1616"/>
  <path d="M76 96 Q82 93 88 96 M100 96 Q106 93 112 96" stroke="#2a1e1a" stroke-width="2" fill="none"/>
  <path d="M55 139 C60 129 74 127 93 127 C112 127 124 129 130 139 Z" fill="#4a2828"/>
  </g>
</svg>
</div>
<div class="abs" style="left:1357px;top:689px;width:44px;height:37px;border-radius:6px;background:rgba(105,105,105,0.92)"></div>
<svg class="abs" style="left:1357px;top:689px" width="44" height="37" viewBox="0 0 44 37" fill="none" stroke-linecap="round">
<rect x="18" y="8.5" width="8.6" height="14" rx="4.3" fill="#f4f4f4"/>
<path d="M15 16.5 C15 22 18.5 25.7 22.3 25.7 C26 25.7 29.7 22 29.7 16.5 M22.3 25.7 V29" stroke="#f4f4f4" stroke-width="1.5"/>
<path d="M11.7 9.3 L32 28.9" stroke="#696969" stroke-width="3.5"/>
<path d="M11.7 9.3 L32 28.9" stroke="#f4f4f4" stroke-width="1.5"/>
</svg>
<!-- pager -->
<svg class="abs" style="left:1425px;top:754px" width="14" height="22" viewBox="0 0 14 22"><path d="M11 2L3 11l8 9" stroke="#7a7a7a" stroke-width="1.8" fill="none"/></svg>
<div class="abs" style="left:1453px;top:751px;width:40px;text-align:center;font-size:21px;line-height:26px;color:#f2f2f2">1/2</div>
<svg class="abs" style="left:1507px;top:754px" width="14" height="22" viewBox="0 0 14 22"><path d="M3 2l8 9-8 9" stroke="#f2f2f2" stroke-width="1.8" fill="none"/></svg>
<!-- tile 5 -->
<div class="abs" style="left:1351px;top:796px;width:243px;height:135px;border-radius:9px;overflow:hidden;background:#ebeae8">
<svg class="abs" style="left:0;top:0" width="243" height="135" viewBox="0 0 243 135">
  <defs><filter id="bl5" x="-5%" y="-5%" width="110%" height="110%"><feGaussianBlur stdDeviation="0.8"/></filter></defs>
  <g filter="url(#bl5)">
  <rect x="-5" y="-5" width="253" height="35" fill="#efeeec"/>
  <path d="M0 0 L70 0 L80 20 L243 22 L243 30 L60 30 Z" fill="#f6f5f3"/>
  <rect x="-5" y="12" width="13" height="110" fill="#e6e6e6"/>
  <rect x="8" y="13" width="20" height="108" fill="#3a3a3c"/>
  <rect x="10" y="16" width="16" height="72" fill="#dfe5ec"/>
  <rect x="10" y="88" width="16" height="30" fill="#a4aab2"/>
  <rect x="28" y="24" width="30" height="97" fill="#eeeeee"/>
  <circle cx="40" cy="49" r="2" fill="#555"/>
  <circle cx="41" cy="63" r="6" fill="#f6f6f6" stroke="#bbb" stroke-width=".8"/>
  <rect x="58" y="36" width="3" height="72" fill="#5a5a5a"/>
  <rect x="61" y="40" width="10" height="66" fill="#c8ccd2"/>
  <rect x="71" y="44" width="3" height="62" fill="#5a5a5a"/>
  <rect x="74" y="48" width="18" height="58" fill="#e4e4e4"/>
  <rect x="92" y="48" width="60" height="58" fill="#dde2e8"/>
  <rect x="150" y="48" width="6" height="58" fill="#eaeaea"/>
  <rect x="156" y="48" width="24" height="58" fill="#dde2e8"/>
  <rect x="74" y="96" width="110" height="10" fill="#d8d0c2"/>
  <rect x="180" y="30" width="68" height="79" fill="#a8a093"/>
  <rect x="186" y="94" width="62" height="28" rx="6" fill="#cbc4b6"/>
  <rect x="-5" y="106" width="253" height="34" fill="#c9c8c8"/>
  <rect x="33" y="95" width="33" height="26" rx="8" fill="#3c4a2c"/>
  <path d="M34 140 C40 116 70 110 122 108 C160 110 180 120 184 140 Z" fill="#8e3e34"/>
  <path d="M60 120 l8 -4 M80 116 l10 3 M150 114 l8 5 M100 125 l12 -2" stroke="#d8b0a8" stroke-width="2"/>
  <path d="M90 80 C90 108 104 124 122 124 C140 124 154 108 154 80 C154 58 140 44 122 44 C104 44 90 58 90 80 Z" fill="#a46e54"/>
  <path d="M89 72 C86 42 100 26 122 25 C142 25 152 36 150 54 C140 46 124 46 110 52 C100 56 95 64 89 72 Z" fill="#2e2a2c"/>
  <path d="M100 68 Q110 63 120 68 M126 68 Q136 63 146 68" stroke="#8a6a58" stroke-width="1.5" fill="none"/>
  <path d="M110 96 Q122 104 136 96" stroke="#f4f0ec" stroke-width="3" fill="none"/>
  </g>
</svg>
</div>

</body></html>
